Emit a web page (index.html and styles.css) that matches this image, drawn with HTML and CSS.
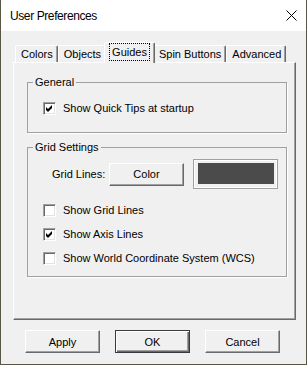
FILE: index.html
```html
<!DOCTYPE html>
<html lang="en">
<head>
  <meta charset="UTF-8">
  <title>User Preferences</title>
  <link rel="stylesheet" href="styles.css">
</head>
<body>

<div class="window">
  <!-- Title bar -->
  <div class="titlebar">
    <span class="title">User Preferences</span>
    <svg class="close" width="11" height="11" viewBox="0 0 11 11">
      <path d="M0.5 0.5 L10.5 10.5 M10.5 0.5 L0.5 10.5" stroke="#000" stroke-width="1" fill="none"/>
    </svg>
  </div>

  <div class="content">
    <div class="tabs">
      <div class="tab">Colors</div>
      <div class="tab">Objects</div>
      <div class="tab active"><span class="focus">Guides</span></div>
      <div class="tab">Spin Buttons</div>
      <div class="tab">Advanced</div>
    </div>

    <div class="panel">
      <fieldset class="group general">
        <legend>General</legend>
        <label class="check first">
          <span class="box checked">
            <svg width="7" height="7" viewBox="0 0 7 7"><polygon points="0,2 2,4 6,0 6,3 2,7 0,5" fill="#000"/></svg>
          </span>
          Show Quick Tips at startup
        </label>
      </fieldset>

      <fieldset class="group grid">
        <legend>Grid Settings</legend>
        <div class="grid-row">
          <span class="grid-label">Grid Lines:</span>
          <button class="btn">Color</button>
          <div class="swatch"><div class="swatch-fill"></div></div>
        </div>
        <label class="check first">
          <span class="box"></span>
          Show Grid Lines
        </label>
        <label class="check">
          <span class="box checked">
            <svg width="7" height="7" viewBox="0 0 7 7"><polygon points="0,2 2,4 6,0 6,3 2,7 0,5" fill="#000"/></svg>
          </span>
          Show Axis Lines
        </label>
        <label class="check">
          <span class="box"></span>
          Show World Coordinate System (WCS)
        </label>
      </fieldset>
    </div>

    <div class="buttons">
      <button class="btn">Apply</button>
      <button class="btn default">OK</button>
      <button class="btn">Cancel</button>
    </div>
  </div>
</div>

</body>
</html>
```

FILE: styles.css
```css
body {
  margin: 0;
  padding: 0;
  font-family: "Liberation Sans", Arial, sans-serif;
  font-size: 11px;
  color: #000;
  background-color: #5a5646;
}

.window {
  width: 307px;
  height: 365px;
  box-sizing: border-box;
  border: 1px solid #5a5646;
  border-top: 0;
  background-color: #f0f0f0;
  display: flex;
  flex-direction: column;
}

.titlebar {
  height: 31px;
  background-color: #ffffff;
  display: flex;
  align-items: center;
  justify-content: space-between;
  padding: 0 9px 0 9px;
}

.title {
  font-size: 12px;
  letter-spacing: -0.4px;
}

.close {
  display: block;
}

.content {
  flex: 1;
  padding: 11px 10px 0 12px;
}

/* Tabs */
.tabs {
  display: flex;
  align-items: flex-end;
  height: 20px;
  padding-left: 2px;
  position: relative;
  z-index: 1;
}

.tab {
  box-sizing: border-box;
  height: 17px;
  padding: 0 4px 0 5px;
  line-height: 16px;
  border: 1px solid;
  border-color: #ffffff #696969 transparent #ffffff;
  border-bottom: 0;
  border-radius: 2px 2px 0 0;
  box-shadow: inset -1px 0 0 #a0a0a0;
  background-color: #f0f0f0;
}

.tab.active {
  height: 21px;
  margin: 0 -2px -1px -2px;
  padding: 1px 5px 0 5px;
  position: relative;
  z-index: 2;
}

.tab .focus {
  display: inline-block;
  padding: 0 2px;
  outline: 1px dotted #000;
  outline-offset: 0;
}

/* Tab page */
.panel {
  box-sizing: border-box;
  height: 258px;
  border: 1px solid;
  border-color: #ffffff #696969 #696969 #ffffff;
  box-shadow: inset -1px -1px 0 #a0a0a0;
  padding: 13px 8px 0 13px;
}

.group {
  margin: 0;
  padding: 0 8px 0 5px;
  border: 1px solid #a0a0a0;
  box-shadow: 1px 1px 0 #ffffff;
  min-width: 0;
}

.group legend {
  padding: 0 2px;
  line-height: 13px;
}

.general {
  padding-bottom: 17px;
}

.grid {
  margin-top: 8px;
  padding-bottom: 11px;
}

.check {
  display: flex;
  align-items: center;
  gap: 7px;
  height: 13px;
  line-height: 13px;
  margin-left: 10px;
  margin-top: 11px;
}

.check.first {
  margin-top: 13px;
}

.grid .check.first {
  margin-top: 15px;
}

.box {
  box-sizing: border-box;
  width: 13px;
  height: 13px;
  background-color: #ffffff;
  border: 1px solid;
  border-color: #a0a0a0 #ffffff #ffffff #a0a0a0;
  box-shadow: inset 1px 1px 0 #696969, inset -1px -1px 0 #e3e3e3;
  display: flex;
  align-items: center;
  justify-content: center;
}

.box svg {
  display: block;
}

.grid-row {
  display: flex;
  align-items: center;
  margin-top: 5px;
}

.grid-label {
  margin-left: 19px;
  width: 57px;
}

.swatch {
  box-sizing: border-box;
  width: 85px;
  height: 30px;
  margin-left: 9px;
  border: 1px solid #a0a0a0;
  box-shadow: inset 0 0 0 1px #ffffff;
  padding: 3px 3px 4px 4px;
}

.swatch-fill {
  height: 100%;
  background-color: #4b4b4b;
}

/* Buttons */
.btn {
  box-sizing: border-box;
  width: 75px;
  height: 23px;
  padding: 0;
  font-family: "Liberation Sans", Arial, sans-serif;
  font-size: 11px;
  color: #000;
  background-color: #f0f0f0;
  border: 1px solid;
  border-color: #ffffff #696969 #696969 #ffffff;
  box-shadow: inset -1px -1px 0 #a0a0a0;
}

.btn.default {
  border-color: #3a3a3a;
  box-shadow: inset 1px 1px 0 #ffffff, inset -1px -1px 0 #696969, inset -2px -2px 0 #a0a0a0;
}

.buttons {
  display: flex;
  gap: 15px;
  margin-top: 10px;
  padding-left: 12px;
}
```
